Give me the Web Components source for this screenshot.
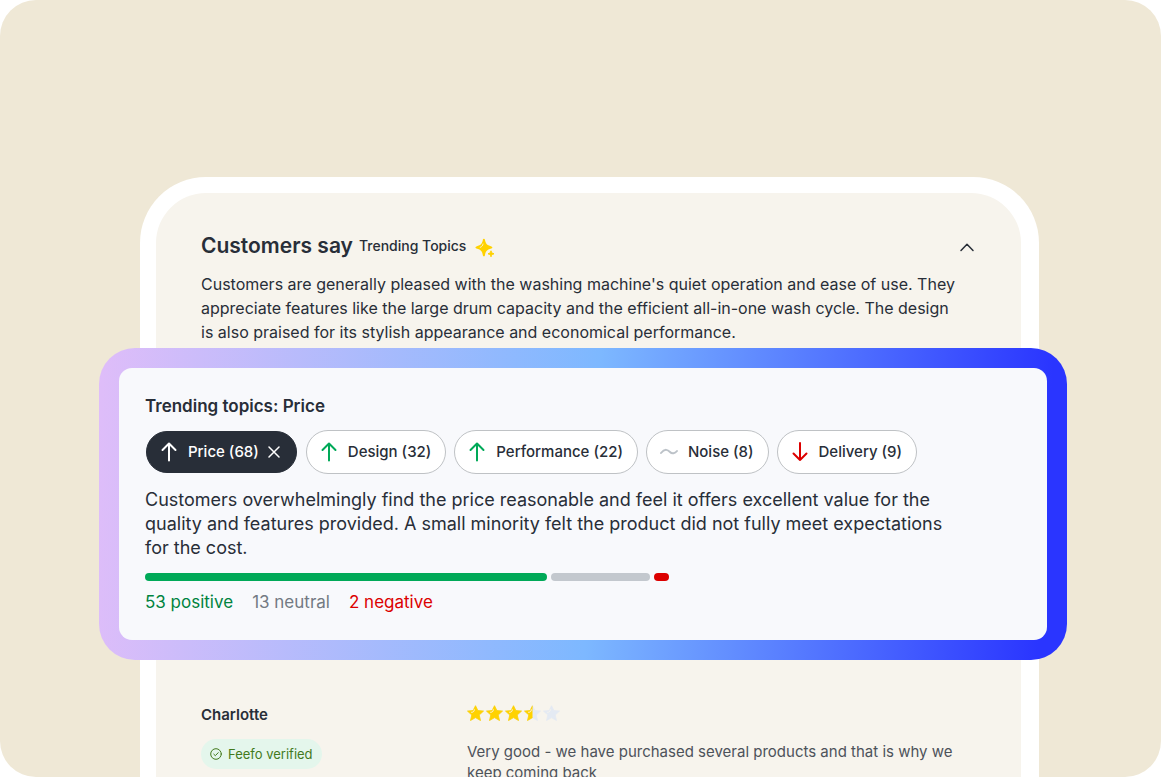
<!DOCTYPE html>
<html lang="en">
<head>
<meta charset="utf-8">
<meta name="viewport" content="width=device-width, initial-scale=1">
<title>Customers say</title>
<style>
  body { margin: 0; background: #fff; color: #282e38; font-family: Inter, "Open Sans", sans-serif; }
</style>
</head>
<body>
<page-stage>
  <device-frame>
    <customers-say heading="Customers say" sub="Trending Topics">Customers are generally pleased with the washing machine's quiet operation and ease of use. They<br>appreciate features like the large drum capacity and the efficient all-in-one wash cycle. The design<br>is also praised for its stylish appearance and economical performance.</customers-say>
    <topic-panel heading="Trending topics: Price">
      <topic-chip slot="chips" trend="up" selected>Price (68)</topic-chip>
      <topic-chip slot="chips" trend="up">Design (32)</topic-chip>
      <topic-chip slot="chips" trend="up">Performance (22)</topic-chip>
      <topic-chip slot="chips" trend="flat">Noise (8)</topic-chip>
      <topic-chip slot="chips" trend="down">Delivery (9)</topic-chip>
      Customers overwhelmingly find the price reasonable and feel it offers excellent value for the<br>quality and features provided. A small minority felt the product did not fully meet expectations<br>for the cost.
      <sentiment-meter slot="meter" positive="53" neutral="13" negative="2"></sentiment-meter>
    </topic-panel>
    <customer-review name="Charlotte" rating="3.5">Very good - we have purchased several products and that is why we<br>keep coming back</customer-review>
  </device-frame>
</page-stage>

<script>
const define = (name, render) => customElements.define(name, class extends HTMLElement {
  connectedCallback() {
    if (this.shadowRoot) return;
    this.attachShadow({ mode: "open" }).innerHTML = render(this);
  }
});

define("page-stage", () => `
  <style>
    :host { display: block; box-sizing: border-box; height: 100vh; overflow: hidden;
      padding: 177px 122px 0 140px; border-radius: 36px; background: #efe8d6; }
  </style><slot></slot>`);

define("device-frame", () => `
  <style>
    :host { display: block; background: #fff; border-radius: 66px 66px 0 0; padding: 16px 18px 0 16px; }
    main { display: block; background: #f7f4ed; border-radius: 50px 50px 0 0; padding: 37px 44px 40px 45px; }
  </style><main><slot></slot></main>`);

define("customers-say", el => `
  <style>
    :host { display: block; }
    header { display: flex; align-items: center; height: 32px; }
    h1 { margin: 0 6px 0 0; font-size: 21px; line-height: 32px; font-weight: 600; }
    h2 { margin: 0 9px 0 0; font-size: 14px; line-height: 32px; font-weight: 500; }
    .spark { margin-top: 3px; }
    button { margin-left: auto; padding: 4px 2px; border: 0; background: none; color: inherit; display: flex; }
    p { margin: 10px 0 0; font-size: 16px; line-height: 24px; white-space: nowrap; }
  </style>
  <header>
    <h1>${el.getAttribute("heading")}</h1><h2>${el.getAttribute("sub")}</h2>
    <svg class="spark" width="20" height="20" viewBox="0 0 20 20" fill="#ffd200" aria-hidden="true">
      <path d="M8.900.8c.5 0 .8.3 1 .8.8 4 1.600 5.500 6.500 6.900.6.2 1 .5 1 1s-.4.8-1 1c-4.900 1.300-5.700 2.900-6.500 6.900-.1.5-.5.9-1 .9s-.9-.4-1-.9c-.7-4-1.500-5.600-6.500-6.900-.6-.2-1-.5-1-1s.4-.8 1-1c5-1.400 5.800-2.900 6.500-6.900.1-.5.5-.8 1-.8z"/>
      <path d="M5.200 9.400C7 8.800 7.800 7.600 8 6" fill="none" stroke="#f7f4ed" stroke-width=".8" stroke-linecap="round"/>
      <path d="M16 12.800c.4 1.900.9 2.400 3 3-2.100.6-2.600 1.100-3 3-.4-1.900-.9-2.400-3-3 2.100-.6 2.600-1.100 3-3z" stroke="#ffd200" stroke-linejoin="round"/>
    </svg>
    <button type="button" aria-label="Collapse" aria-expanded="true">
      <svg width="16" height="16" viewBox="0 0 16 16" fill="none" stroke="currentColor" stroke-width="1.500" stroke-linecap="round" stroke-linejoin="round"><path d="M2 12.500l6-6.300 6 6.300"/></svg>
    </button>
  </header>
  <p><slot></slot></p>`);

define("topic-panel", el => `
  <style>
    :host { display: block; margin: 4px -90px 0 -102px; padding: 20px;
      border-radius: 36px; background: linear-gradient(93deg, #dfbdf9 0%, #7db8ff 51%, #2a35ff 97%); }
    section { background: #f8f9fc; border-radius: 13px; padding: 26px; }
    h2 { margin: 0; font-size: 17px; line-height: 24px; font-weight: 600; }
    .chips { display: flex; flex-wrap: wrap; align-items: center; gap: 8px; margin-top: 12px; }
    p { margin: 14px 0 0; font-size: 18px; line-height: 24px; white-space: nowrap; }
  </style>
  <section>
    <h2>${el.getAttribute("heading")}</h2>
    <div class="chips"><slot name="chips"></slot></div>
    <p><slot></slot></p>
    <slot name="meter"></slot>
  </section>`);

const trends = {
  up: ["#00a958", "M8 18.500V2M1.500 8 8 1.500 14.500 8"],
  down: ["#dc0000", "M8 1v17M1.500 11.500 8 18l6.500-6.500"],
  flat: ["#bcc2c8", "M0 11c4-5 7-3 9-1s5 1.500 7-1"]
};
define("topic-chip", el => {
  const [color, path] = trends[el.getAttribute("trend")];
  const on = el.hasAttribute("selected");
  return `
  <style>
    :host { display: block; }
    :host([selected]) { margin: 0 1px; }
    button { box-sizing: border-box; display: flex; align-items: center; height: 44px; padding: 0 14px;
      border: 1px solid #bfc2c5; border-radius: 22px; background: #fff; color: inherit;
      font: 500 15px/24px Inter, "Open Sans", sans-serif; white-space: nowrap; }
    button[aria-pressed="true"] { height: 42px; border-color: #282e38; background: #282e38; color: #fff; }
    .trend { margin-right: 11px; overflow: visible; }
    .close { margin: 0 2px 0 9px; }
  </style>
  <button type="button" aria-pressed="${on}">
    <svg class="trend" width="16" height="20" viewBox="0 0 16 20" fill="none" stroke="${on ? "#fff" : color}" stroke-width="2" stroke-linecap="round" stroke-linejoin="round" aria-hidden="true"><path d="${path}"/></svg>
    <slot></slot>
    ${on ? `<svg class="close" width="12" height="12" viewBox="0 0 12 12" stroke="#fff" stroke-width="1.500" stroke-linecap="round" aria-hidden="true"><path d="M1 1l10 10M11 1 1 11"/></svg>` : ""}
  </button>`;
});

define("sentiment-meter", el => {
  const n = k => el.getAttribute(k);
  return `
  <style>
    :host { display: block; max-width: 524px; margin-top: 13px; }
    .bar { display: flex; gap: 4px; height: 8px; }
    .bar i { border-radius: 4px; flex-basis: 0; }
    .p { background: #00a958; } .u { background: #c3c8ce; } .n { background: #dc0000; }
    ul { display: flex; gap: 19px; margin: 9px 0 0; padding: 0; list-style: none; font-size: 17px; line-height: 24px; white-space: nowrap; }
    li.tp { color: #00833f; } li.tu { color: #737a83; } li.tn { color: #dc0000; }
  </style>
  <div class="bar" aria-hidden="true"><i class="p" style="flex-grow:${n("positive")}"></i><i class="u" style="flex-grow:${n("neutral")}"></i><i class="n" style="flex-grow:${n("negative")}"></i></div>
  <ul><li class="tp">${n("positive")} positive</li><li class="tu">${n("neutral")} neutral</li><li class="tn">${n("negative")} negative</li></ul>`;
});

define("star-rating", el => {
  const value = +el.getAttribute("value");
  const body = "M8.500.7l2.400 4.900 5.600.5-4.300 3.900 1.300 5.500-5-2.900-5 2.900 1.300-5.500L.5 6.100l5.600-.5z";
  const star = i => {
    const fill = Math.max(0, Math.min(1, value - i)) * 17;
    return `<svg width="17" height="16" viewBox="0 0 17 16" stroke-width=".8" stroke-linejoin="round" aria-hidden="true">
      <clipPath id="c${i}"><rect width="${fill}" height="16"/></clipPath>
      <path fill="#e4eaf3" stroke="#e4eaf3" d="${body}"/><path fill="#ffd200" stroke="#ffd200" clip-path="url(#c${i})" d="${body}"/>
      <path d="M4.600 7.300C6.500 7.300 7.400 6.300 7.300 4.700" fill="none" stroke="#f7f4ed" stroke-width="1" stroke-linecap="round"/></svg>`;
  };
  return `<style>:host { display: flex; gap: 2px; } svg { display: block; }</style>` + [0, 1, 2, 3, 4].map(star).join("");
});

define("verified-badge", () => `
  <style>
    :host { display: inline-flex; align-items: center; gap: 6px; height: 30px; box-sizing: border-box; padding: 0 9px;
      border-radius: 15px; background: #e4f6ec; color: #437a1d; font-size: 13px; line-height: 20px; white-space: nowrap; }
  </style>
  <svg width="12" height="12" viewBox="0 0 12 12" fill="none" stroke="currentColor" stroke-linecap="round" stroke-linejoin="round" aria-hidden="true"><circle cx="6" cy="6" r="5.300"/><path d="M3.800 6.200l1.500 1.500 2.900-3"/></svg>
  <slot></slot>`);

define("customer-review", el => `
  <style>
    :host { display: grid; grid-template-columns: 266px 1fr; margin-top: 45px; }
    h3 { margin: 0 0 14px; font-size: 15px; line-height: 20px; font-weight: 600; }
    p { margin: 20px 0 0; font-size: 15px; line-height: 21px; color: #4d525a; white-space: nowrap; }
  </style>
  <div><h3>${el.getAttribute("name")}</h3><verified-badge>Feefo verified</verified-badge></div>
  <div><star-rating value="${el.getAttribute("rating")}" role="img" aria-label="${el.getAttribute("rating")} out of 5"></star-rating><p><slot></slot></p></div>`);
</script>
</body>
</html>
